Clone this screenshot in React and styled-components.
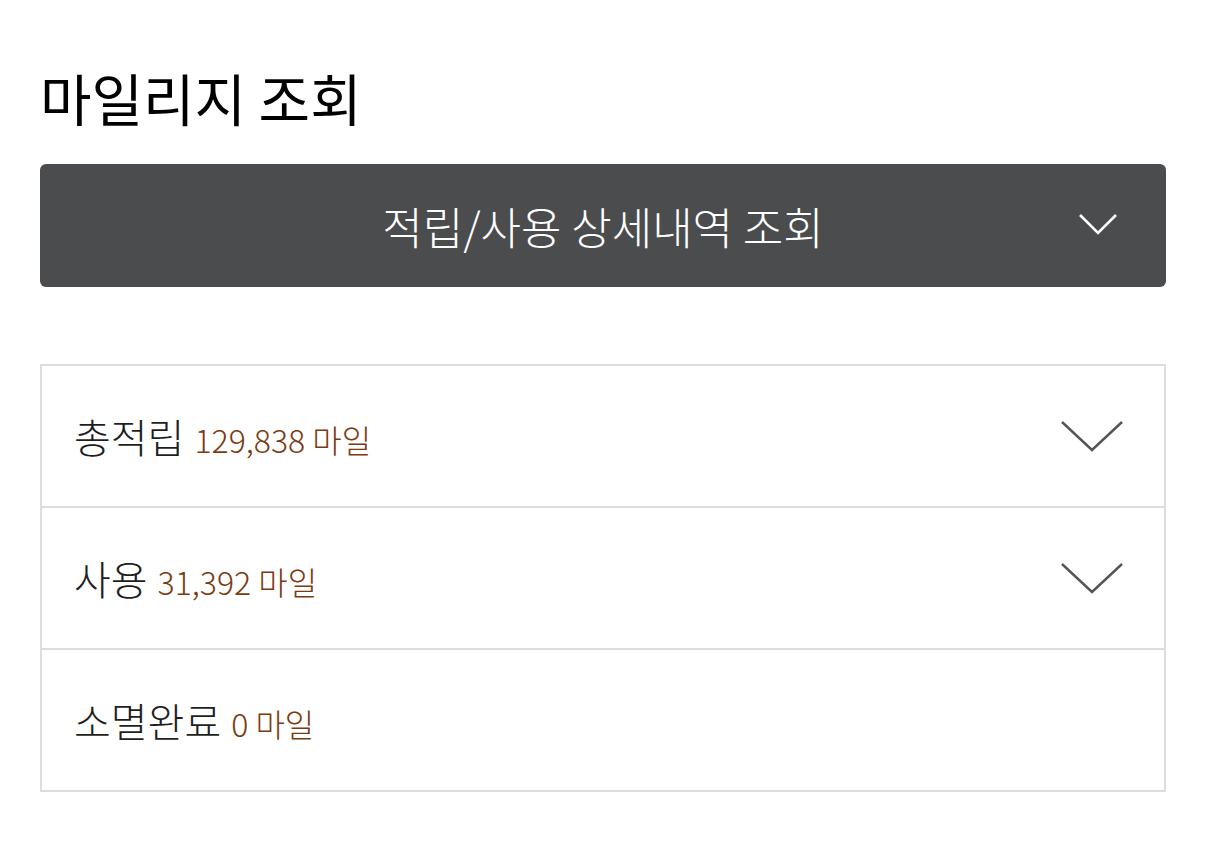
import React from "react";
import styled, { createGlobalStyle } from "styled-components";

const Global = createGlobalStyle`
  html, body { margin: 0; padding: 0; background: #fff; }
  body { font-family: "Noto Sans CJK KR", "Noto Sans", sans-serif; }
`;

const Page = styled.div`
  padding: 59px 40px 40px;
  display: flex;
  flex-direction: column;
`;

const Title = styled.h1`
  margin: 0;
  font-size: 56px;
  font-weight: 400;
  line-height: 76px;
  color: #000;
`;

const ToggleButton = styled.button`
  margin-top: 29px;
  height: 123px;
  border: none;
  border-radius: 6px;
  background: #4b4c4e;
  color: #fff;
  font-family: inherit;
  font-size: 44px;
  font-weight: 300;
  position: relative;
  display: flex;
  align-items: center;
  justify-content: center;
  padding: 0;
`;

const ButtonChevron = styled.svg`
  position: absolute;
  right: 48px;
  top: 50%;
  transform: translateY(-50%);
  margin-top: -2px;
`;

const List = styled.ul`
  list-style: none;
  margin: 77px 0 0;
  padding: 0;
  border: 2px solid #dddddd;
`;

const Row = styled.li`
  height: 140px;
  display: flex;
  align-items: center;
  justify-content: space-between;
  padding: 0 40px 0 32px;
  & + & { border-top: 2px solid #dddddd; }
`;

const Label = styled.span`
  font-size: 40px;
  font-weight: 300;
  color: #1e1e1e;
`;

const Amount = styled.span`
  font-size: 32px;
  font-weight: 300;
  color: #7b3a0f;
  margin-left: 10px;
`;

const Chevron = styled.svg`
  display: block;
`;

const ChevronDown = () => (
  <Chevron width="64" height="32" viewBox="0 0 64 32">
    <path d="M2 2 L32 30 L62 2" fill="none" stroke="#555" strokeWidth="2.4" />
  </Chevron>
);

const rows = [
  { label: "총적립", amount: "129,838 마일", expandable: true },
  { label: "사용", amount: "31,392 마일", expandable: true },
  { label: "소멸완료", amount: "0 마일", expandable: false },
];

export default function App() {
  return (
    <>
      <Global />
      <Page>
        <Title>마일리지 조회</Title>
        <ToggleButton>
          적립/사용 상세내역 조회
          <ButtonChevron width="40" height="26" viewBox="0 0 40 26">
            <path d="M2 4 L20 22 L38 4" fill="none" stroke="#fff" strokeWidth="2.6" />
          </ButtonChevron>
        </ToggleButton>
        <List>
          {rows.map((r) => (
            <Row key={r.label}>
              <div>
                <Label>{r.label}</Label>
                <Amount>{r.amount}</Amount>
              </div>
              {r.expandable && <ChevronDown />}
            </Row>
          ))}
        </List>
      </Page>
    </>
  );
}
